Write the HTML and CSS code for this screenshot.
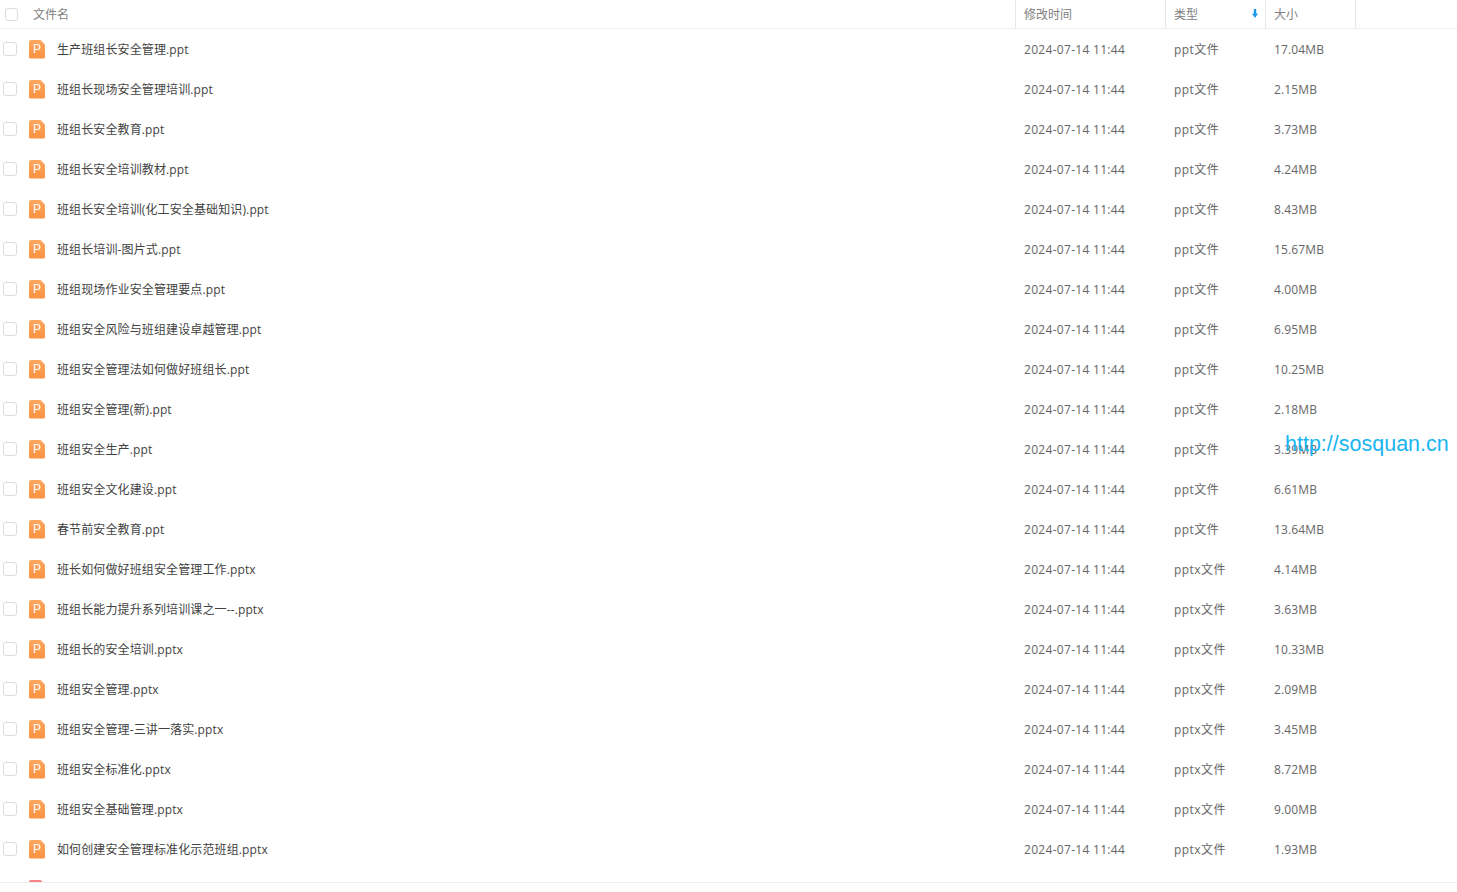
FILE: index.html
```html
<!DOCTYPE html>
<html lang="zh-CN">
<head>
<meta charset="utf-8">
<title>文件列表</title>
<link rel="stylesheet" href="styles.css">
</head>
<body>
<div class="file-table">
  <div class="head">
    <div class="cell c-check"><span class="check head-check"></span></div>
    <div class="cell c-name">文件名</div>
    <div class="cell c-time sep">修改时间</div>
    <div class="cell c-type sep">类型<svg class="sort" viewBox="0 0 6 9" width="6" height="9"><path d="M1.800 0h2.400v4.500H6L3 9 0 4.500h1.800z" fill="#1e9bf0"/></svg></div>
    <div class="cell c-size sep">大小</div>
    <div class="cell c-rest sep"></div>
  </div>
  <div class="rows">
    <div class="row"><div class="c-check"><span class="check"></span></div><div class="c-name"><span class="ficon">P</span><span class="fname">生产班组长安全管理.ppt</span></div><div class="c-time">2024-07-14 11:44</div><div class="c-type">ppt文件</div><div class="c-size">17.04MB</div></div>
    <div class="row"><div class="c-check"><span class="check"></span></div><div class="c-name"><span class="ficon">P</span><span class="fname">班组长现场安全管理培训.ppt</span></div><div class="c-time">2024-07-14 11:44</div><div class="c-type">ppt文件</div><div class="c-size">2.15MB</div></div>
    <div class="row"><div class="c-check"><span class="check"></span></div><div class="c-name"><span class="ficon">P</span><span class="fname">班组长安全教育.ppt</span></div><div class="c-time">2024-07-14 11:44</div><div class="c-type">ppt文件</div><div class="c-size">3.73MB</div></div>
    <div class="row"><div class="c-check"><span class="check"></span></div><div class="c-name"><span class="ficon">P</span><span class="fname">班组长安全培训教材.ppt</span></div><div class="c-time">2024-07-14 11:44</div><div class="c-type">ppt文件</div><div class="c-size">4.24MB</div></div>
    <div class="row"><div class="c-check"><span class="check"></span></div><div class="c-name"><span class="ficon">P</span><span class="fname">班组长安全培训(化工安全基础知识).ppt</span></div><div class="c-time">2024-07-14 11:44</div><div class="c-type">ppt文件</div><div class="c-size">8.43MB</div></div>
    <div class="row"><div class="c-check"><span class="check"></span></div><div class="c-name"><span class="ficon">P</span><span class="fname">班组长培训-图片式.ppt</span></div><div class="c-time">2024-07-14 11:44</div><div class="c-type">ppt文件</div><div class="c-size">15.67MB</div></div>
    <div class="row"><div class="c-check"><span class="check"></span></div><div class="c-name"><span class="ficon">P</span><span class="fname">班组现场作业安全管理要点.ppt</span></div><div class="c-time">2024-07-14 11:44</div><div class="c-type">ppt文件</div><div class="c-size">4.00MB</div></div>
    <div class="row"><div class="c-check"><span class="check"></span></div><div class="c-name"><span class="ficon">P</span><span class="fname">班组安全风险与班组建设卓越管理.ppt</span></div><div class="c-time">2024-07-14 11:44</div><div class="c-type">ppt文件</div><div class="c-size">6.95MB</div></div>
    <div class="row"><div class="c-check"><span class="check"></span></div><div class="c-name"><span class="ficon">P</span><span class="fname">班组安全管理法如何做好班组长.ppt</span></div><div class="c-time">2024-07-14 11:44</div><div class="c-type">ppt文件</div><div class="c-size">10.25MB</div></div>
    <div class="row"><div class="c-check"><span class="check"></span></div><div class="c-name"><span class="ficon">P</span><span class="fname">班组安全管理(新).ppt</span></div><div class="c-time">2024-07-14 11:44</div><div class="c-type">ppt文件</div><div class="c-size">2.18MB</div></div>
    <div class="row"><div class="c-check"><span class="check"></span></div><div class="c-name"><span class="ficon">P</span><span class="fname">班组安全生产.ppt</span></div><div class="c-time">2024-07-14 11:44</div><div class="c-type">ppt文件</div><div class="c-size">3.39MB</div></div>
    <div class="row"><div class="c-check"><span class="check"></span></div><div class="c-name"><span class="ficon">P</span><span class="fname">班组安全文化建设.ppt</span></div><div class="c-time">2024-07-14 11:44</div><div class="c-type">ppt文件</div><div class="c-size">6.61MB</div></div>
    <div class="row"><div class="c-check"><span class="check"></span></div><div class="c-name"><span class="ficon">P</span><span class="fname">春节前安全教育.ppt</span></div><div class="c-time">2024-07-14 11:44</div><div class="c-type">ppt文件</div><div class="c-size">13.64MB</div></div>
    <div class="row"><div class="c-check"><span class="check"></span></div><div class="c-name"><span class="ficon">P</span><span class="fname">班长如何做好班组安全管理工作.pptx</span></div><div class="c-time">2024-07-14 11:44</div><div class="c-type">pptx文件</div><div class="c-size">4.14MB</div></div>
    <div class="row"><div class="c-check"><span class="check"></span></div><div class="c-name"><span class="ficon">P</span><span class="fname">班组长能力提升系列培训课之一--.pptx</span></div><div class="c-time">2024-07-14 11:44</div><div class="c-type">pptx文件</div><div class="c-size">3.63MB</div></div>
    <div class="row"><div class="c-check"><span class="check"></span></div><div class="c-name"><span class="ficon">P</span><span class="fname">班组长的安全培训.pptx</span></div><div class="c-time">2024-07-14 11:44</div><div class="c-type">pptx文件</div><div class="c-size">10.33MB</div></div>
    <div class="row"><div class="c-check"><span class="check"></span></div><div class="c-name"><span class="ficon">P</span><span class="fname">班组安全管理.pptx</span></div><div class="c-time">2024-07-14 11:44</div><div class="c-type">pptx文件</div><div class="c-size">2.09MB</div></div>
    <div class="row"><div class="c-check"><span class="check"></span></div><div class="c-name"><span class="ficon">P</span><span class="fname">班组安全管理-三讲一落实.pptx</span></div><div class="c-time">2024-07-14 11:44</div><div class="c-type">pptx文件</div><div class="c-size">3.45MB</div></div>
    <div class="row"><div class="c-check"><span class="check"></span></div><div class="c-name"><span class="ficon">P</span><span class="fname">班组安全标准化.pptx</span></div><div class="c-time">2024-07-14 11:44</div><div class="c-type">pptx文件</div><div class="c-size">8.72MB</div></div>
    <div class="row"><div class="c-check"><span class="check"></span></div><div class="c-name"><span class="ficon">P</span><span class="fname">班组安全基础管理.pptx</span></div><div class="c-time">2024-07-14 11:44</div><div class="c-type">pptx文件</div><div class="c-size">9.00MB</div></div>
    <div class="row"><div class="c-check"><span class="check"></span></div><div class="c-name"><span class="ficon">P</span><span class="fname">如何创建安全管理标准化示范班组.pptx</span></div><div class="c-time">2024-07-14 11:44</div><div class="c-type">pptx文件</div><div class="c-size">1.93MB</div></div>
    <div class="row"><div class="c-check"></div><div class="c-name"><span class="ficon ficon-red"></span></div></div>
  </div>
</div>
<div class="watermark">http://sosquan.cn</div>
</body>
</html>
```

FILE: styles.css
```css
html, body {
  margin: 0;
  height: 892px;
  overflow: hidden;
  background: #fff;
}
body {
  position: relative;
  font-family: "Open Sans", "Noto Sans CJK SC", sans-serif;
  font-size: 12px;
  color: #666;
}
.file-table {
  height: 883px;
  border-bottom: 1px solid #eee;
  box-sizing: border-box;
  overflow: hidden;
}
.head {
  display: flex;
  height: 29px;
  box-sizing: border-box;
  border-bottom: 1px solid #f2f2f2;
  color: #808080;
}
.cell {
  display: flex;
  align-items: center;
  box-sizing: border-box;
  height: 28px;
  padding-bottom: 1px;
}
.sep {
  border-left: 1px solid #e6e6e6;
  padding-left: 8px;
}
.c-check {
  width: 29px;
  flex: none;
  display: flex;
  align-items: center;
}
.c-name {
  flex: 1;
  min-width: 0;
  display: flex;
  align-items: center;
}
.c-time { width: 150px; flex: none; }
.c-type { width: 100px; flex: none; }
.c-size { width: 90px; flex: none; }
.c-rest { width: 102px; flex: none; }
.head .c-check { padding: 1px 0 0 5px; }
.head .c-name { padding-left: 4px; }
.head .c-type { justify-content: space-between; padding-right: 7px; }
.sort { flex: none; }
.check {
  display: block;
  box-sizing: border-box;
  width: 14px;
  height: 14px;
  border: 1px solid #dcdcdc;
  border-radius: 3px;
  margin-left: 3px;
}
.head-check {
  width: 13px;
  height: 13px;
  margin-left: 0;
}
.row {
  display: flex;
  align-items: center;
  height: 40px;
  padding-right: 102px;
}
.row .c-time,
.row .c-type,
.row .c-size {
  padding-left: 9px;
  box-sizing: border-box;
  letter-spacing: 0.3px;
}
.row .c-size { letter-spacing: 0.15px; }
.row .c-type { letter-spacing: 0.45px; }
.ficon {
  flex: none;
  width: 16px;
  height: 19px;
  margin-right: 12px;
  border-radius: 2px;
  clip-path: polygon(0 0, 11px 0, 16px 5px, 16px 100%, 0 100%);
  background: linear-gradient(#fda85f, #fb9140);
  color: #fff;
  font-family: "Liberation Sans", sans-serif;
  font-size: 12px;
  line-height: 19px;
  text-align: center;
}
.ficon-red { background: #f77f86; }
.fname { color: #424242; white-space: nowrap; letter-spacing: 0.12px; }
.watermark {
  position: absolute;
  left: 1285px;
  top: 432px;
  font-family: "Liberation Sans", sans-serif;
  font-size: 21.5px;
  line-height: 24px;
  color: #19b5f1;
  white-space: nowrap;
}
```
